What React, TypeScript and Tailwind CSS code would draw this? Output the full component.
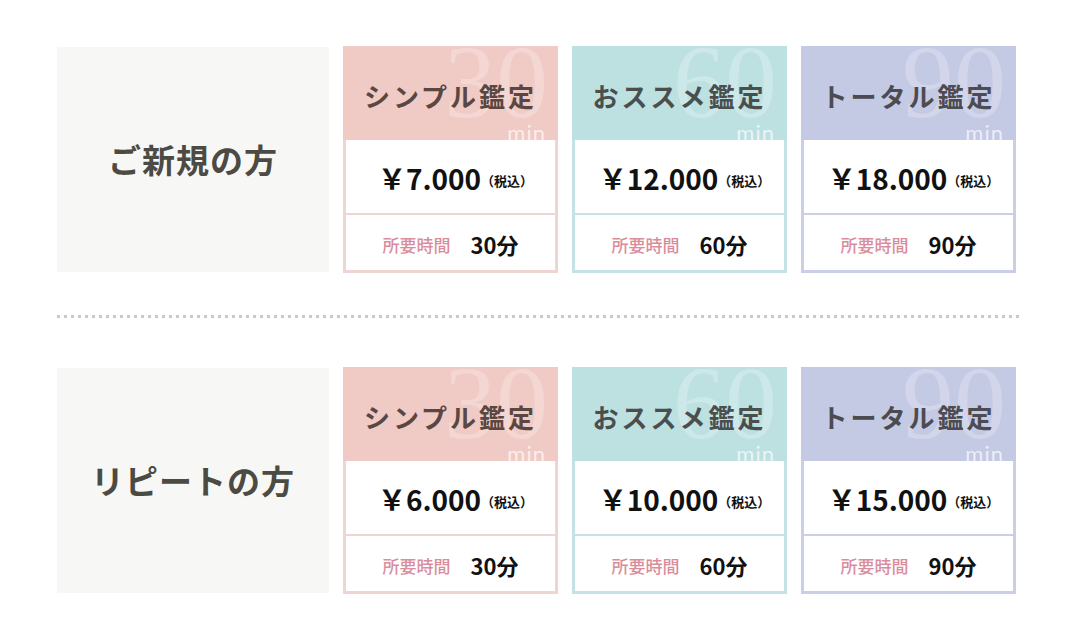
import React from "react";

type Plan = {
  title: string;
  num: string;
  head: string;
  border: string;
  titleColor: string;
  price: string;
  time: string;
};

const font = { fontFamily: '"Noto Sans CJK JP", "Noto Sans", sans-serif' };

function Card({ p }: { p: Plan }) {
  return (
    <div className="flex w-[215px] flex-col">
      <div className={`relative flex h-[94px] items-center justify-center overflow-hidden pt-[4px] ${p.head}`}>
        <span
          className="pointer-events-none absolute right-[10px] top-[-16px] text-[104px] leading-none text-white/25"
          style={{ fontFamily: '"Liberation Serif", serif', fontWeight: 300 }}
        >
          {p.num}
        </span>
        <span
          className="pointer-events-none absolute bottom-[-4px] right-[12px] text-[22px] leading-none tracking-[1px] text-white/70"
          style={{ fontFamily: 'Lato, "Noto Sans", sans-serif' }}
        >
          min
        </span>
        <span className={`relative text-[26px] font-bold tracking-[3px] ${p.titleColor}`}>{p.title}</span>
      </div>
      <div className={`flex flex-col border-x-[3px] border-b-[3px] bg-white ${p.border}`}>
        <div className={`flex h-[75px] items-center justify-center border-b-2 pt-[3px] pl-[10px] ${p.border}`}>
          <span className="text-[28px] font-bold leading-none text-[#111]">{p.price}</span>
          <span className="pt-[4px] text-[13px] font-bold leading-none text-[#111]">（税込）</span>
        </div>
        <div className="flex h-[55px] items-center justify-center gap-[20px] pt-[4px]">
          <span className="text-[17px] font-medium text-[#d98d9c]">所要時間</span>
          <span className="text-[22px] font-bold text-[#111]">{p.time}</span>
        </div>
      </div>
    </div>
  );
}

function Row({ label, prices }: { label: string; prices: string[] }) {
  const plans: Plan[] = [
    {
      title: "シンプル鑑定",
      num: "30",
      head: "bg-[#f0cac4]",
      border: "border-[#efd5d1]",
      titleColor: "text-[#5a4741]",
      price: prices[0],
      time: "30分",
    },
    {
      title: "おススメ鑑定",
      num: "60",
      head: "bg-[#bde0e1]",
      border: "border-[#c5e1e4]",
      titleColor: "text-[#4a4f4e]",
      price: prices[1],
      time: "60分",
    },
    {
      title: "トータル鑑定",
      num: "90",
      head: "bg-[#c4c9e4]",
      border: "border-[#cacee6]",
      titleColor: "text-[#4b4b51]",
      price: prices[2],
      time: "90分",
    },
  ];
  return (
    <div className="flex gap-[14px]">
      <div className="my-[1px] flex w-[272px] items-center justify-center bg-[#f7f7f5]">
        <span className="text-[33px] font-bold tracking-[1px] text-[#4b4a43]">{label}</span>
      </div>
      {plans.map((p) => (
        <Card key={p.title} p={p} />
      ))}
    </div>
  );
}

export default function App() {
  return (
    <div className="min-h-[633px] w-[1080px] bg-white pl-[57px] pt-[46px]" style={font}>
      <Row label="ご新規の方" prices={["￥7.000", "￥12.000", "￥18.000"]} />
      <div className="mb-[49px] mt-[42px] h-[3px] w-[963px] bg-[linear-gradient(to_right,#c9c9c9_3px,transparent_3px)] bg-[length:7px_3px]" />
      <Row label="リピートの方" prices={["￥6.000", "￥10.000", "￥15.000"]} />
    </div>
  );
}
